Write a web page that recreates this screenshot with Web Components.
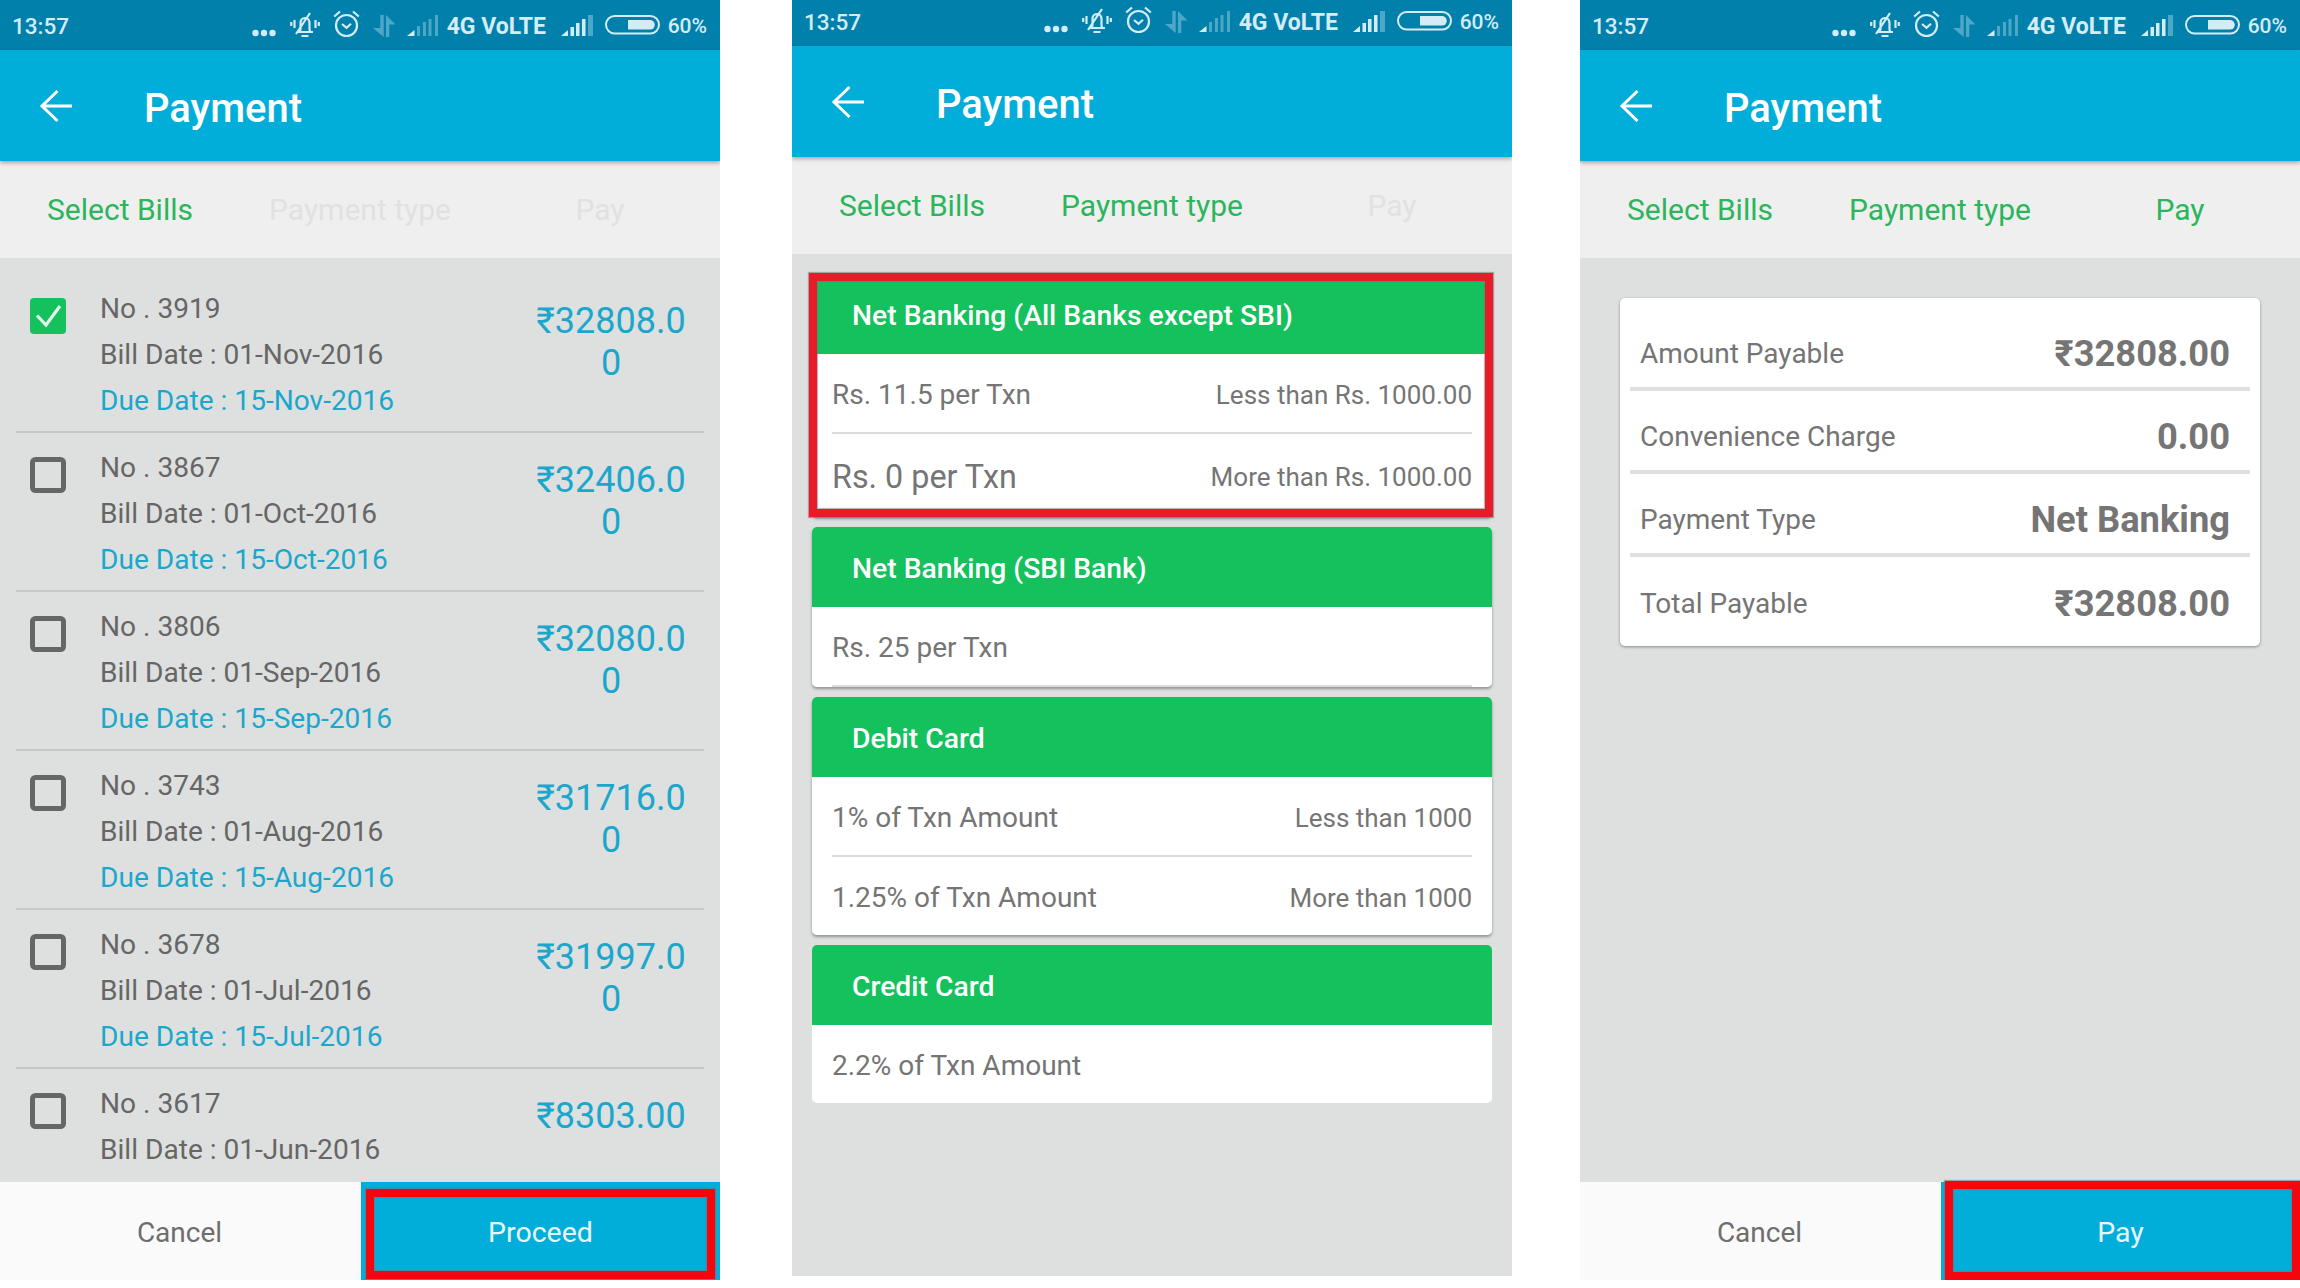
<!DOCTYPE html>
<html>
<head>
<meta charset="utf-8">
<title>Payment</title>
<style>
  html, body { margin: 0; background: #fff; overflow: hidden; }
  body { font-family: Roboto, "Noto Sans", sans-serif; }
</style>
</head>
<body>

<pay-page>
  <!-- Step 1 -->
  <phone-panel>
    <status-bar></status-bar>
    <app-header>Payment</app-header>
    <step-tabs step="1"></step-tabs>
    <bill-list>
      <bill-row checked>
        <span slot="no">No . 3919</span><span slot="bill">Bill Date : 01-Nov-2016</span>
        <span slot="due">Due Date : 15-Nov-2016</span><span slot="amount">₹32808.00</span>
      </bill-row>
      <bill-row>
        <span slot="no">No . 3867</span><span slot="bill">Bill Date : 01-Oct-2016</span>
        <span slot="due">Due Date : 15-Oct-2016</span><span slot="amount">₹32406.00</span>
      </bill-row>
      <bill-row>
        <span slot="no">No . 3806</span><span slot="bill">Bill Date : 01-Sep-2016</span>
        <span slot="due">Due Date : 15-Sep-2016</span><span slot="amount">₹32080.00</span>
      </bill-row>
      <bill-row>
        <span slot="no">No . 3743</span><span slot="bill">Bill Date : 01-Aug-2016</span>
        <span slot="due">Due Date : 15-Aug-2016</span><span slot="amount">₹31716.00</span>
      </bill-row>
      <bill-row>
        <span slot="no">No . 3678</span><span slot="bill">Bill Date : 01-Jul-2016</span>
        <span slot="due">Due Date : 15-Jul-2016</span><span slot="amount">₹31997.00</span>
      </bill-row>
      <bill-row>
        <span slot="no">No . 3617</span><span slot="bill">Bill Date : 01-Jun-2016</span>
        <span slot="amount">₹8303.00</span>
      </bill-row>
    </bill-list>
    <footer-actions>
      <span slot="cancel">Cancel</span>
      <span slot="primary">Proceed</span>
      <red-mark slot="mark" style="--inset: 7px 5px 1px 5px"></red-mark>
    </footer-actions>
  </phone-panel>

  <!-- Step 2 -->
  <phone-panel class="middle">
    <status-bar></status-bar>
    <app-header>Payment</app-header>
    <step-tabs step="2"></step-tabs>
    <fee-list>
      <fee-card>
        <span slot="title">Net Banking (All Banks except SBI)</span>
        <fee-row><span slot="left">Rs. 11.5 per Txn</span><span slot="right">Less than Rs. 1000.00</span></fee-row>
        <fee-row big last><span slot="left">Rs. 0 per Txn</span><span slot="right">More than Rs. 1000.00</span></fee-row>
        <red-mark slot="mark" style="--inset: -1px -1px 0 -3px; --red: #e81c28"></red-mark>
      </fee-card>
      <fee-card>
        <span slot="title">Net Banking (SBI Bank)</span>
        <fee-row><span slot="left">Rs. 25 per Txn</span></fee-row>
      </fee-card>
      <fee-card>
        <span slot="title">Debit Card</span>
        <fee-row><span slot="left">1% of Txn Amount</span><span slot="right">Less than 1000</span></fee-row>
        <fee-row last><span slot="left">1.25% of Txn Amount</span><span slot="right">More than 1000</span></fee-row>
      </fee-card>
      <fee-card>
        <span slot="title">Credit Card</span>
        <fee-row last><span slot="left">2.2% of Txn Amount</span></fee-row>
      </fee-card>
    </fee-list>
  </phone-panel>

  <!-- Step 3 -->
  <phone-panel>
    <status-bar></status-bar>
    <app-header>Payment</app-header>
    <step-tabs step="3"></step-tabs>
    <summary-card>
      <summary-row><span slot="label">Amount Payable</span><span slot="value">₹32808.00</span></summary-row>
      <summary-row><span slot="label">Convenience Charge</span><span slot="value">0.00</span></summary-row>
      <summary-row><span slot="label">Payment Type</span><span slot="value">Net Banking</span></summary-row>
      <summary-row last><span slot="label">Total Payable</span><span slot="value">₹32808.00</span></summary-row>
    </summary-card>
    <footer-actions>
      <span slot="cancel">Cancel</span>
      <span slot="primary">Pay</span>
      <red-mark slot="mark" style="--inset: -1px 0 0 4px"></red-mark>
    </footer-actions>
  </phone-panel>
</pay-page>

<script>
// Page: three phone screens side by side
class PayPage extends HTMLElement {
  constructor() {
    super()
    this.attachShadow({ mode: "open" }).innerHTML = `
      <style>
        :host { display: flex; align-items: flex-start; width: 2300px; height: 1288px; overflow: hidden; }
        ::slotted(.middle) { margin: -4px 68px 0 72px; }
      </style>
      <slot></slot>`
  }
}

class PhonePanel extends HTMLElement {
  constructor() {
    super()
    this.attachShadow({ mode: "open" }).innerHTML = `
      <style>
        :host {
          display: flex;
          flex-direction: column;
          flex: none;
          width: 720px;
          height: 1280px;
          overflow: hidden;
          background: #dee0df;
          font-family: Roboto, "Noto Sans", sans-serif;
        }
      </style>
      <slot></slot>`
  }
}

// Status bar, every icon is 50px high so y values read straight off the bar
class StatusBar extends HTMLElement {
  constructor() {
    super()
    this.attachShadow({ mode: "open" }).innerHTML = `
      <style>
        :host {
          display: flex;
          align-items: center;
          flex: none;
          height: 50px;
          padding: 0 13px 0 12px;
          background: #0280ac;
          color: #d3ecf5;
          font-size: 22.500px;
          font-weight: 500;
        }
        .time { margin-right: auto; padding-top: 2px; }
        .icons { display: flex; align-items: center; }
        svg { display: block; height: 50px; }
        .net { width: 100px; margin-left: 9px; padding-top: 2px; white-space: nowrap; font-weight: 700; font-size: 23px; }
        .pct { margin-left: 8px; padding-top: 2px; font-size: 21px; }
      </style>
      <span class="time">13:57</span>
      <div class="icons">
        <svg width="24" viewBox="0 0 24 50" fill="currentColor">
          <circle cx="3.500" cy="33" r="3.200"/><circle cx="12" cy="33" r="3.200"/><circle cx="20.500" cy="33" r="3.200"/>
        </svg>
        <svg style="margin-left:14px" width="30" viewBox="0 0 30 50" fill="none" stroke="currentColor" stroke-width="2.200">
          <path d="M7 32h16M9.500 32c1.500-1.500 1-3 1-8.500 0-3.500 1.800-5.500 4.500-5.500s4.500 2 4.500 5.500c0 5.500-.5 7 1 8.500M11.500 36h7M6 34 20 13"/>
          <path d="M4.500 20v8M1.200 22v4M25.500 20v8M28.800 22v4"/>
        </svg>
        <svg style="margin-left:13px" width="27" viewBox="0 0 27 50" fill="none" stroke="currentColor" stroke-width="2.200">
          <circle cx="13.500" cy="25.500" r="10.500"/>
          <path d="M1.200 16.500 7 11.500M20 11.500 25.800 16.500M9 24l4.500 3.800 4.500-4"/>
        </svg>
        <svg style="margin-left:13px" width="23" viewBox="0 0 23 50" fill="currentColor" opacity=".36">
          <path d="M7.300 15h3.400v22L0 28h7.300zM13 37V15l9.500 9.500h-6.200V37z"/>
        </svg>
        <svg style="margin-left:11px" width="31" viewBox="0 0 31 50" fill="currentColor">
          <path d="M0 36 7.500 30v6z"/>
          <path opacity=".36" d="M10 26h3v10h-3zM16 22h3v14h-3zM21.500 19h3v17h-3zM28 15h3v21h-3z"/>
        </svg>
        <span class="net">4G VoLTE</span>
        <svg style="margin-left:14px" width="32" viewBox="0 0 32 50" fill="currentColor">
          <path d="M0 36 7 30v6zM9.500 27H13v9H9.500zM15 23h3.500v13H15zM21 19h3.500v17H21z"/>
          <path opacity=".36" d="M27 15h5v21h-5z"/>
        </svg>
        <svg style="margin-left:12px" width="55" viewBox="0 0 55 50" fill="none" stroke="currentColor" stroke-width="2">
          <rect x="1" y="16" width="53" height="17.500" rx="8.700"/>
          <path fill="currentColor" stroke="none" d="M23 20h22a4.800 4.800 0 0 1 0 9.600H23z"/>
        </svg>
        <span class="pct">60%</span>
      </div>`
  }
}

class AppHeader extends HTMLElement {
  constructor() {
    super()
    this.attachShadow({ mode: "open" }).innerHTML = `
      <style>
        :host {
          display: flex;
          align-items: center;
          flex: none;
          position: relative;
          height: 111px;
          background: #01aed9;
          color: #fff;
          box-shadow: 0 2px 4px rgba(0,0,0,0.3);
          font-size: 40px;
          font-weight: 500;
        }
        svg { display: block; margin-left: 39px; margin-right: 71px; }
        span { padding-top: 5px; }
      </style>
      <svg width="34" height="34" viewBox="0 0 34 34" fill="none" stroke="#fff" stroke-width="3">
        <path d="M33 17H3M18.500 2 3 17l15.500 15"/>
      </svg>
      <span><slot></slot></span>`
  }
}

// Steps reached so far are green, the rest are washed out
class StepTabs extends HTMLElement {
  constructor() {
    super()
    const step = Number(this.getAttribute("step"))
    const tabs = ["Select Bills", "Payment type", "Pay"]
      .map((t, i) => `<span class="${i < step ? "on" : ""}">${t}</span>`)
      .join("")
    this.attachShadow({ mode: "open" }).innerHTML = `
      <style>
        :host {
          display: grid;
          grid-template-columns: repeat(3, 1fr);
          align-items: center;
          flex: none;
          height: 97px;
          background: #efefef;
          font-size: 30px;
          text-align: center;
          color: #e1e1e1;
        }
        .on { color: #2bb55c; }
      </style>
      ${tabs}`
  }
}

class BillList extends HTMLElement {
  constructor() {
    super()
    this.attachShadow({ mode: "open" }).innerHTML = `
      <style>
        :host { display: block; flex: 1; min-height: 0; overflow: hidden; padding-top: 16px; }
      </style>
      <slot></slot>`
  }
}

class BillRow extends HTMLElement {
  constructor() {
    super()
    const box = this.hasAttribute("checked")
      ? `<svg width="36" height="36" viewBox="0 0 36 36"><rect width="36" height="36" rx="4" fill="#15c15d"/><path d="M7 17.500 16 27 30 8" fill="none" stroke="#e4f8ec" stroke-width="3.200"/></svg>`
      : `<svg width="36" height="36" viewBox="0 0 36 36"><rect x="2.500" y="2.500" width="31" height="31" rx="3" fill="none" stroke="#666" stroke-width="5"/></svg>`
    this.attachShadow({ mode: "open" }).innerHTML = `
      <style>
        :host {
          display: grid;
          grid-template-columns: 36px 1fr 160px;
          column-gap: 34px;
          box-sizing: border-box;
          height: 159px;
          margin: 0 16px;
          padding: 0 13px 0 14px;
          border-bottom: 2px solid #c6c8c7;
          font-size: 28.100px;
          color: #666;
        }
        svg { display: block; margin-top: 24px; }
        .text { padding-top: 12px; line-height: 46px; }
        .text div { height: 46px; }
        .due { color: #1ba7cc; }
        .amount {
          padding-top: 26px;
          font-size: 36px;
          line-height: 42px;
          text-align: center;
          color: #1ba7cc;
          overflow-wrap: anywhere;
        }
      </style>
      ${box}
      <div class="text">
        <div><slot name="no"></slot></div>
        <div><slot name="bill"></slot></div>
        <div class="due"><slot name="due"></slot></div>
      </div>
      <div class="amount"><slot name="amount"></slot></div>`
  }
}

class FooterActions extends HTMLElement {
  constructor() {
    super()
    this.attachShadow({ mode: "open" }).innerHTML = `
      <style>
        :host {
          display: grid;
          grid-template-columns: 361px 1fr;
          flex: none;
          height: 98px;
          margin-top: auto;
          font-size: 28.500px;
        }
        div { display: flex; align-items: center; justify-content: center; box-sizing: border-box; padding-top: 2px; }
        .cancel { padding-right: 2px; background: #fafafa; color: #6e6e6e; font-size: 28px; }
        .primary { position: relative; background: #01aed9; color: #e6f8fc; }
      </style>
      <div class="cancel"><slot name="cancel"></slot></div>
      <div class="primary"><slot name="primary"></slot><slot name="mark"></slot></div>`
  }
}

// Red annotation frame drawn over a component
class RedMark extends HTMLElement {
  constructor() {
    super()
    this.attachShadow({ mode: "open" }).innerHTML = `
      <style>
        :host {
          position: absolute;
          inset: var(--inset, 0);
          box-sizing: border-box;
          border: 8px solid var(--red, #f5060f);
          box-shadow: 0 0 1px 1px rgba(120,110,120,0.55), inset 0 0 1px 1px rgba(120,110,120,0.55);
        }
      </style>`
  }
}

class FeeList extends HTMLElement {
  constructor() {
    super()
    this.attachShadow({ mode: "open" }).innerHTML = `
      <style>
        :host { display: flex; flex-direction: column; gap: 10px; padding: 20px 20px 0; }
      </style>
      <slot></slot>`
  }
}

class FeeCard extends HTMLElement {
  constructor() {
    super()
    this.attachShadow({ mode: "open" }).innerHTML = `
      <style>
        :host {
          display: block;
          position: relative;
          border-radius: 5px;
          box-shadow: 0 2px 3px rgba(0,0,0,0.35);
        }
        :host(:last-child) { box-shadow: none; }
        .box { border-radius: 5px; overflow: hidden; background: #fff; }
        .title {
          display: flex;
          align-items: center;
          box-sizing: border-box;
          height: 80px;
          padding: 2px 0 0 40px;
          background: #15c15d;
          color: #fff;
          font-size: 28.300px;
          font-weight: 500;
        }
      </style>
      <div class="box">
        <div class="title"><slot name="title"></slot></div>
        <slot></slot>
      </div>
      <slot name="mark"></slot>`
  }
}

class FeeRow extends HTMLElement {
  constructor() {
    super()
    this.attachShadow({ mode: "open" }).innerHTML = `
      <style>
        :host {
          display: flex;
          align-items: center;
          justify-content: space-between;
          box-sizing: border-box;
          height: 80px;
          margin: 0 20px;
          padding-top: 3px;
          border-bottom: 2px solid #dcdcdc;
          font-size: 28px;
          color: #757575;
        }
        :host([last]) { height: 78px; border-bottom: 0; }
        :host([big]) { height: 83px; }
        :host([big]) .left { font-size: 32.300px; }
        .right { font-size: 26px; }
      </style>
      <span class="left"><slot name="left"></slot></span>
      <span class="right"><slot name="right"></slot></span>`
  }
}

class SummaryCard extends HTMLElement {
  constructor() {
    super()
    this.attachShadow({ mode: "open" }).innerHTML = `
      <style>
        :host {
          display: block;
          flex: none;
          margin: 40px 40px 0;
          padding: 10px 10px 6px;
          border-radius: 5px;
          background: #fff;
          box-shadow: 0 1px 3px rgba(0,0,0,0.4);
        }
      </style>
      <slot></slot>`
  }
}

class SummaryRow extends HTMLElement {
  constructor() {
    super()
    this.attachShadow({ mode: "open" }).innerHTML = `
      <style>
        :host {
          display: flex;
          align-items: center;
          justify-content: space-between;
          box-sizing: border-box;
          height: 83px;
          padding: 11px 20px 0 10px;
          border-bottom: 4px solid #e0e0e0;
          font-size: 28px;
          color: #757575;
        }
        :host([last]) { border-bottom: 0; padding-top: 9px; }
        .value { font-size: 36.300px; font-weight: 700; }
      </style>
      <span><slot name="label"></slot></span>
      <span class="value"><slot name="value"></slot></span>`
  }
}

customElements.define("pay-page", PayPage)
customElements.define("phone-panel", PhonePanel)
customElements.define("status-bar", StatusBar)
customElements.define("app-header", AppHeader)
customElements.define("step-tabs", StepTabs)
customElements.define("bill-list", BillList)
customElements.define("bill-row", BillRow)
customElements.define("footer-actions", FooterActions)
customElements.define("red-mark", RedMark)
customElements.define("fee-list", FeeList)
customElements.define("fee-card", FeeCard)
customElements.define("fee-row", FeeRow)
customElements.define("summary-card", SummaryCard)
customElements.define("summary-row", SummaryRow)
</script>
</body>
</html>
